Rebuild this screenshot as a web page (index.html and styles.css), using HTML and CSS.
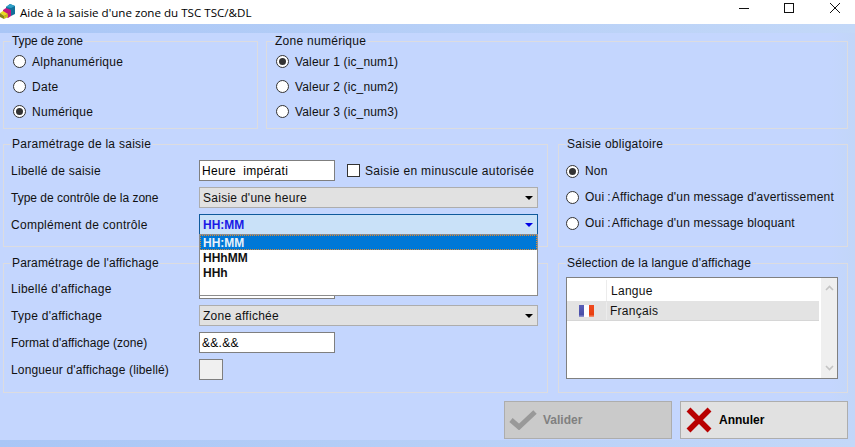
FILE: index.html
```html
<!DOCTYPE html>
<html lang="fr">
<head>
  <meta charset="UTF-8" />
  <title>Aide à la saisie</title>
  <link rel="stylesheet" href="styles.css">
</head>
<body>

<div class="titlebar">
  <svg class="app-icon" width="16" height="16" viewBox="0 0 16 16">
    <polygon points="6,4 10,1 15,3 15,11 11,13 6,10" fill="#12709a"/>
    <polygon points="6,4 10,1 15,3 11,5" fill="#2fa0c8"/>
    <polygon points="3,7 6,5 11,7 11,13 8,15 3,12" fill="#c2187f"/>
    <polygon points="0,10 3,8 8,11 4,13" fill="#e8dc20"/>
    <polygon points="0,10 4,13 4,16 0,14" fill="#8a8416"/>
    <polygon points="4,13 8,11 8,14 4,16" fill="#c8bc18"/>
  </svg>
  <span class="title">Aide à la saisie d'une zone du TSC TSC/&amp;DL</span>
  <div class="win-buttons">
    <svg width="10" height="10" viewBox="0 0 10 10"><line x1="0" y1="5.5" x2="10" y2="5.5" stroke="#111"/></svg>
    <svg width="10" height="10" viewBox="0 0 10 10"><rect x="0.5" y="0.5" width="9" height="9" fill="none" stroke="#111"/></svg>
    <svg width="10" height="10" viewBox="0 0 10 10"><path d="M0 0L10 10M10 0L0 10" stroke="#111" fill="none"/></svg>
  </div>
</div>

<div class="panel">
  <div class="row-top">
    <fieldset class="group group-type">
      <legend class="tighter">Type de zone</legend>
      <div class="radio"><span class="dot"></span>Alphanumérique</div>
      <div class="radio"><span class="dot"></span>Date</div>
      <div class="radio"><span class="dot on"></span>Numérique</div>
    </fieldset>
    <fieldset class="group group-num">
      <legend>Zone numérique</legend>
      <div class="radio"><span class="dot on"></span>Valeur 1 (ic_num1)</div>
      <div class="radio"><span class="dot"></span>Valeur 2 (ic_num2)</div>
      <div class="radio"><span class="dot"></span>Valeur 3 (ic_num3)</div>
    </fieldset>
  </div>

  <div class="row-main">
    <div class="col-left">
      <fieldset class="group group-saisie">
        <legend>Paramétrage de la saisie</legend>
        <div class="field">
          <label>Libellé de saisie</label>
          <div class="input">Heure&nbsp; impérati</div>
          <span class="check"></span>
          <span class="wide">Saisie en minuscule autorisée</span>
        </div>
        <div class="field">
          <label class="tight">Type de contrôle de la zone</label>
          <div class="select">Saisie d'une heure<span class="arrow"></span></div>
        </div>
        <div class="field">
          <label>Complément de contrôle</label>
          <div class="select open">HH:MM<span class="arrow"></span>
            <div class="dropdown">
              <div class="option selected">HH:MM</div>
              <div class="option">HHhMM</div>
              <div class="option">HHh</div>
            </div>
          </div>
        </div>
      </fieldset>

      <fieldset class="group group-affichage">
        <legend class="snug">Paramétrage de l'affichage</legend>
        <div class="field">
          <label>Libellé d'affichage</label>
          <div class="input"></div>
        </div>
        <div class="field">
          <label>Type d'affichage</label>
          <div class="select">Zone affichée<span class="arrow"></span></div>
        </div>
        <div class="field">
          <label class="tight">Format d'affichage (zone)</label>
          <div class="input">&amp;&amp;.&amp;&amp;</div>
        </div>
        <div class="field">
          <label class="snug">Longueur d'affichage (libellé)</label>
          <div class="input small"></div>
        </div>
      </fieldset>
    </div>

    <div class="col-right">
      <fieldset class="group group-oblig">
        <legend>Saisie obligatoire</legend>
        <div class="radio"><span class="dot on"></span>Non</div>
        <div class="radio"><span class="dot"></span>Oui<span class="colon">:</span>Affichage d'un message d'avertissement</div>
        <div class="radio"><span class="dot"></span>Oui<span class="colon">:</span>Affichage d'un message bloquant</div>
      </fieldset>

      <fieldset class="group group-langue">
        <legend class="snug">Sélection de la langue d'affichage</legend>
        <div class="list">
          <div class="list-body">
            <div class="list-head">
              <span class="cell-flag"></span>
              <span class="cell-name">Langue</span>
            </div>
            <div class="list-row">
              <span class="cell-flag"><span class="flag"><i class="fr-blue"></i><i class="fr-white"></i><i class="fr-red"></i></span></span>
              <span class="cell-name">Français</span>
            </div>
          </div>
          <div class="scrollbar">
            <svg width="9" height="6" viewBox="0 0 9 6"><path d="M1 5L4.5 1.5L8 5" stroke="#c4c4c4" stroke-width="1.6" fill="none"/></svg>
            <svg width="9" height="6" viewBox="0 0 9 6"><path d="M1 1L4.5 4.5L8 1" stroke="#c4c4c4" stroke-width="1.6" fill="none"/></svg>
          </div>
        </div>
      </fieldset>
    </div>
  </div>

  <div class="actions">
    <div class="btn disabled">
      <svg class="btn-check" width="28" height="20" viewBox="0 0 28 20"><path d="M2 10L10 17L26 2" stroke="#999" stroke-width="5" fill="none"/></svg>
      Valider
    </div>
    <div class="btn">
      <svg class="btn-x" width="26" height="26" viewBox="0 0 26 26"><path d="M2.5 2.5L23.5 23.5M23.5 2.5L2.5 23.5" stroke="#b80000" stroke-width="5.5" fill="none"/></svg>
      Annuler
    </div>
  </div>
</div>

</body>
</html>
```

FILE: styles.css
```css
* {
  box-sizing: border-box;
  margin: 0;
  padding: 0;
}

html, body {
  height: 100%;
}

body {
  width: 855px;
  height: 447px;
  overflow: hidden;
  display: flex;
  flex-direction: column;
  font-family: "Liberation Sans", Arial, sans-serif;
  font-size: 12px;
  letter-spacing: 0.27px;
  color: #111;
  background: linear-gradient(90deg, #a9c6f6, #c3d8f8);
}

/* label widths differ a little from the hinted original */
.wide {
  letter-spacing: 0.34px;
}

.snug {
  letter-spacing: 0.15px;
}

.tight {
  letter-spacing: 0;
}

.tighter {
  letter-spacing: -0.1px;
}

.titlebar {
  height: 24px;
  flex: none;
  display: flex;
  align-items: center;
  background: #fff;
  padding-right: 15px;
}

.app-icon {
  flex: none;
  margin-bottom: 3px;
}

.title {
  margin-left: 4px;
  font-family: "Open Sans", sans-serif;
  font-size: 11.6px;
  letter-spacing: 0;
  color: #000;
}

.win-buttons {
  margin-left: auto;
  display: flex;
  gap: 36px;
  align-self: flex-start;
  margin-top: 3px;
}

.win-buttons svg:first-child {
  margin-right: -1px;
}

.panel {
  flex: 1;
  margin-top: 9px;
  margin-bottom: 7px;
  padding: 1px 7px 0 3px;
  background: linear-gradient(90deg, #c4d6fe 97%, #c2d6f8);
  display: flex;
  flex-direction: column;
}

.group {
  border: 1px solid #dcdce0;
  padding: 0 7px;
  min-width: 0;
}

.group legend {
  padding: 0 1px;
  line-height: 14px;
}

.row-top {
  display: flex;
  gap: 8px;
  height: 95px;
}

.group-type {
  width: 255px;
}

.group-num {
  flex: 1;
  letter-spacing: 0.15px;
}

.group-num legend {
  letter-spacing: 0.27px;
}

.radio {
  height: 25px;
  display: flex;
  align-items: center;
}

.group-type .radio:first-of-type,
.group-num .radio:first-of-type {
  margin-top: 1px;
}

.dot {
  width: 13px;
  height: 13px;
  border: 1px solid #333;
  border-radius: 50%;
  background: #fff;
  margin: 0 6px 0 2px;
  flex: none;
  display: flex;
  align-items: center;
  justify-content: center;
}

.dot.on::before {
  content: '';
  width: 7px;
  height: 7px;
  border-radius: 50%;
  background: #333;
}

.group-oblig .dot {
  margin-left: 0;
}

.colon {
  margin: 0 1px 0 3px;
}

.row-main {
  display: flex;
  gap: 10px;
  margin-top: 8px;
}

.col-left {
  width: 545px;
  display: flex;
  flex-direction: column;
  gap: 9px;
}

.col-right {
  flex: 1;
  display: flex;
  flex-direction: column;
  gap: 9px;
}

.group-saisie,
.group-oblig {
  height: 110px;
}

.group-affichage,
.group-langue {
  height: 137px;
}

.group-saisie {
  padding-top: 9px;
}

.group-affichage {
  padding-top: 8px;
}

.group-oblig {
  padding-top: 7px;
  letter-spacing: 0.2px;
}

.group-oblig legend {
  letter-spacing: 0.27px;
}

.group-oblig .radio {
  height: 26px;
}

.field {
  display: flex;
  align-items: center;
  height: 21px;
  margin-bottom: 6px;
}

.field label {
  width: 188px;
  flex: none;
}

.input {
  width: 136px;
  height: 21px;
  line-height: 21px;
  padding: 0 2px;
  background: #fff;
  border: 1px solid #7f7f7f;
  white-space: nowrap;
  color: #000;
}

.input.small {
  width: 24px;
  background: #f0f0f0;
}

.check {
  width: 13px;
  height: 13px;
  margin: 0 5px 0 12px;
  background: #fff;
  border: 1px solid #333;
}

.select {
  position: relative;
  width: 339px;
  height: 21px;
  line-height: 21px;
  padding: 0 3px;
  background: #e1e1e1;
  border: 1px solid #adadad;
}

.arrow {
  position: absolute;
  right: 4px;
  top: 8px;
  border-left: 4px solid transparent;
  border-right: 4px solid transparent;
  border-top: 4px solid #000;
}

.select.open {
  background: #c9e1f8;
  border-color: #0f5a9c;
  font-weight: bold;
  letter-spacing: 0;
  color: #1a1ae6;
}

.select.open .arrow {
  border-top-color: #0000e6;
}

.dropdown {
  position: absolute;
  left: -1px;
  top: 19px;
  width: 339px;
  height: 62px;
  background: #fff;
  border: 1px solid #8c8c8c;
  z-index: 2;
  color: #111;
}

.option {
  height: 15px;
  line-height: 17px;
  padding: 0 3px;
}

.option.selected {
  background: #0078d7;
  color: #e8f2fb;
  outline: 1px dotted #e08a30;
  outline-offset: -1px;
}

.list {
  display: flex;
  width: 272px;
  height: 102px;
  margin-top: 7px;
  background: #fff;
  border: 1px solid #808080;
}

.list-body {
  width: 252px;
}

.list-head,
.list-row {
  display: flex;
  align-items: center;
}

.list-head {
  height: 23px;
  padding-top: 2px;
}

.list-row {
  height: 20px;
  background: #e3e3e3;
  border-bottom: 1px solid #d6d6d6;
  padding-top: 1px;
}

.cell-flag {
  width: 40px;
  height: 100%;
  flex: none;
  display: flex;
  align-items: center;
  justify-content: center;
  border-right: 1px solid #ececec;
}

.cell-name {
  padding-left: 3px;
}

.list-head .cell-name {
  padding-left: 4px;
}

.flag {
  display: flex;
  width: 16px;
  height: 12px;
}

.flag i {
  flex: 1;
}

.fr-blue {
  background: linear-gradient(#5a5fb8, #4a4fa8 80%, #9a9cd4);
}

.fr-white {
  background: #fdfdff;
}

.fr-red {
  background: linear-gradient(#f04a20, #e84010 80%, #f49a80);
}

.scrollbar {
  width: 16px;
  margin-left: 2px;
  background: #efefef;
  display: flex;
  flex-direction: column;
  justify-content: space-between;
  align-items: center;
  padding: 7px 0;
}

.actions {
  display: flex;
  justify-content: flex-end;
  gap: 8px;
  margin-top: 8px;
}

.btn {
  width: 168px;
  height: 38px;
  display: flex;
  align-items: center;
  font-weight: bold;
  letter-spacing: 0;
  color: #000;
  background: #e1e1e1;
  border: 1px solid #adadad;
}

.btn.disabled {
  background: #cacaca;
  color: #808080;
}

.btn-check {
  margin: 0 6px 0 4px;
}

.btn-x {
  margin: 0 7px 0 5px;
}
```
